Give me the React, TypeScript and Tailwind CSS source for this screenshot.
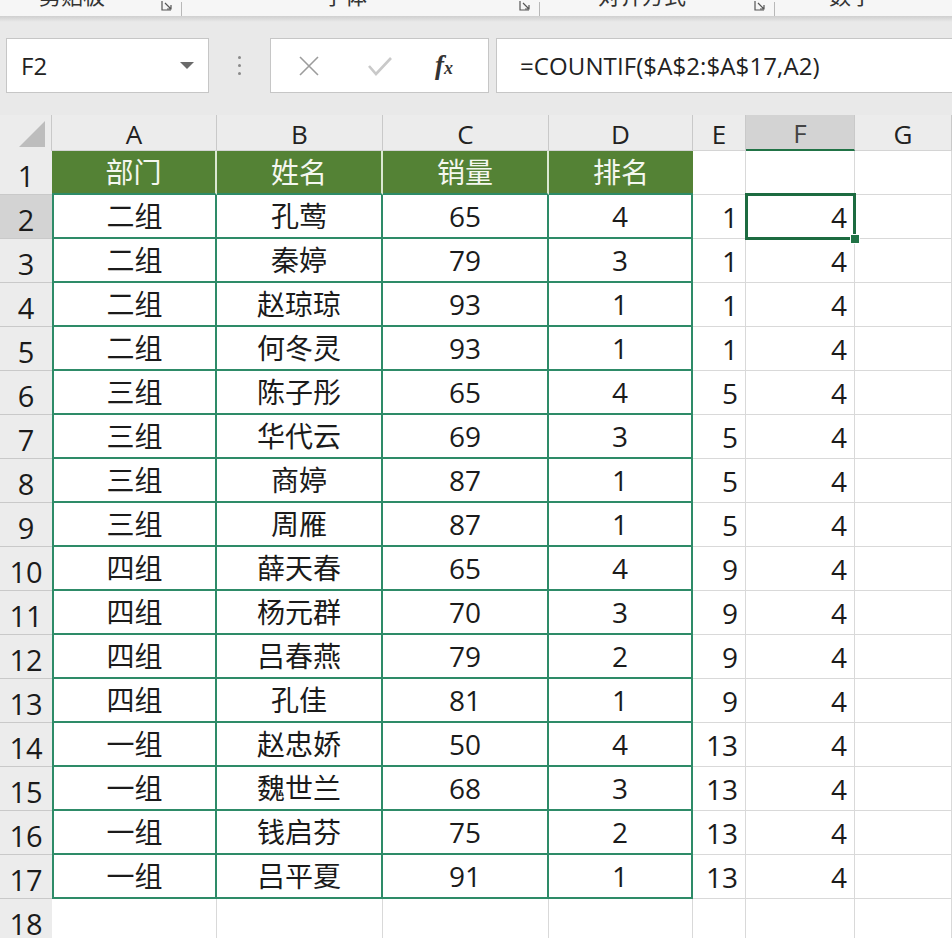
import React from "react";

const FONT = "font-['Open_Sans','Noto_Sans_CJK_SC',sans-serif]";

const rows: [string, string, number, number, number][] = [
  ["二组", "孔莺", 65, 4, 1],
  ["二组", "秦婷", 79, 3, 1],
  ["二组", "赵琼琼", 93, 1, 1],
  ["二组", "何冬灵", 93, 1, 1],
  ["三组", "陈子彤", 65, 4, 5],
  ["三组", "华代云", 69, 3, 5],
  ["三组", "商婷", 87, 1, 5],
  ["三组", "周雁", 87, 1, 5],
  ["四组", "薛天春", 65, 4, 9],
  ["四组", "杨元群", 70, 3, 9],
  ["四组", "吕春燕", 79, 2, 9],
  ["四组", "孔佳", 81, 1, 9],
  ["一组", "赵忠娇", 50, 4, 13],
  ["一组", "魏世兰", 68, 3, 13],
  ["一组", "钱启芬", 75, 2, 13],
  ["一组", "吕平夏", 91, 1, 13],
];

const Launcher = () => (
  <div className="flex items-end h-full">
    <svg width="18" height="16" viewBox="0 0 18 16" className="-mb-[1px]">
      <path d="M2 0 V9 H11" fill="none" stroke="#555" strokeWidth="1.2" />
      <path d="M5 2 L11 8 M7 8 H11 V4" fill="none" stroke="#555" strokeWidth="1.2" />
    </svg>
    <div className="w-[1px] h-[14px] bg-[#b8b8b8] ml-[3px]" />
  </div>
);

const Ribbon = () => (
  <div className="h-[16px] bg-[#f6f6f6] relative overflow-hidden flex text-[22px] text-[#333] leading-none">
    <span className="ml-[39px] -mt-[16px]">剪贴板</span>
    <div className="ml-[55px]"><Launcher /></div>
    <span className="ml-[141px] -mt-[16px]">字体</span>
    <div className="ml-[151px]"><Launcher /></div>
    <span className="ml-[58px] -mt-[16px]">对齐方式</span>
    <div className="ml-[67px]"><Launcher /></div>
    <span className="ml-[54px] -mt-[16px]">数字</span>
  </div>
);

const FormulaBar = () => (
  <div className="flex items-stretch h-[55px] mt-[16px]">
    <div className="ml-[6px] w-[203px] bg-white border border-[#c6c6c6] flex items-center justify-between pl-[14px] pr-[14px]">
      <span className="text-[24px] text-[#222]">F2</span>
      <svg width="14" height="8" viewBox="0 0 14 8">
        <path d="M0 0 H14 L7 7 Z" fill="#6a6a6a" />
      </svg>
    </div>
    <div className="w-[61px] flex flex-col items-center justify-center gap-[5px]">
      <div className="w-[3px] h-[3px] rounded-full bg-[#8a8a8a]" />
      <div className="w-[3px] h-[3px] rounded-full bg-[#8a8a8a]" />
      <div className="w-[3px] h-[3px] rounded-full bg-[#8a8a8a]" />
    </div>
    <div className="w-[219px] bg-white border border-[#c6c6c6] flex items-center">
      <svg width="22" height="22" viewBox="0 0 22 22" className="ml-[27px]">
        <path d="M2 2 L20 20 M20 2 L2 20" stroke="#9c9c9c" strokeWidth="1.6" fill="none" />
      </svg>
      <svg width="26" height="22" viewBox="0 0 26 22" className="ml-[47px]">
        <path d="M2 11 L9 19 L24 3" stroke="#c9c9c9" strokeWidth="2.6" fill="none" />
      </svg>
      <span className="ml-[42px] font-['Liberation_Serif',serif] italic font-bold text-[27px] text-[#333] leading-none">
        f<span className="text-[18px]">x</span>
      </span>
    </div>
    <div className="ml-[7px] flex-1 bg-white border border-r-0 border-[#c6c6c6] flex items-center pl-[23px]">
      <span className="text-[24px] text-[#222] tracking-[0.1px]">=COUNTIF($A$2:$A$17,A2)</span>
    </div>
  </div>
);

const colW = ["w-[165px]", "w-[166px]", "w-[166px]", "w-[144px]", "w-[53px]", "w-[109px]", "w-[97px]"];
const letters = ["A", "B", "C", "D", "E", "F", "G"];

const grid = "border-r border-b border-[#d9d9d9]";
const green = "border-[#2e8b68]";

const RowHead = ({ n, sel }: { n: number; sel?: boolean }) => (
  <div
    className={`w-[52px] shrink-0 h-full flex items-center justify-center pt-[6px] text-[29px] border-b border-[#c9c9c9] ${
      sel ? "bg-[#d3d3d3]" : "bg-[#ececec]"
    }`}
  >
    {n}
  </div>
);

const Sheet = () => (
  <div className="mt-[22px] text-[28px] text-[#1b1b1b] leading-none">
    {/* column headers */}
    <div className="flex h-[36px]">
      <div className="w-[52px] shrink-0 bg-[#ececec] border-r border-[#c9c9c9] flex items-end justify-end pr-[6px] pb-[4px]">
        <svg width="26" height="26" viewBox="0 0 26 26">
          <path d="M26 0 V26 H0 Z" fill="#bdbdbd" />
        </svg>
      </div>
      {letters.map((l, i) => (
        <div
          key={l}
          className={`${colW[i]} shrink-0 flex items-center justify-center pt-[2px] text-[26px] ${
            l === "F"
              ? "bg-[#d3d3d3] border-b-2 border-b-[#217346] border-r border-r-[#c9c9c9] text-[#444]"
              : "bg-[#ececec] border-r border-[#c9c9c9] border-b border-b-[#d4d4d4] text-[#222]"
          }`}
        >
          {l}
        </div>
      ))}
    </div>

    {/* row 1 */}
    <div className="flex h-[44px]">
      <RowHead n={1} />
      {["部门", "姓名", "销量", "排名"].map((t, i) => (
        <div
          key={t}
          className={`${colW[i]} shrink-0 bg-[#548235] text-[#f4f7ef] flex items-center justify-center border-b-2 ${green} ${
            i < 3 ? "border-r-2 border-r-[#dbe8d2]" : ""
          }`}
        >
          {t}
        </div>
      ))}
      <div className={`${colW[4]} shrink-0 bg-white ${grid}`} />
      <div className={`${colW[5]} shrink-0 bg-white ${grid}`} />
      <div className={`${colW[6]} shrink-0 bg-white ${grid}`} />
    </div>

    {rows.map((r, idx) => (
      <div key={idx} className="flex h-[44px]">
        <RowHead n={idx + 2} sel={idx === 0} />
        <div className={`${colW[0]} shrink-0 bg-white flex items-center justify-center border-l-2 border-r-2 border-b-2 ${green}`}>
          {r[0]}
        </div>
        <div className={`${colW[1]} shrink-0 bg-white flex items-center justify-center border-r-2 border-b-2 ${green}`}>
          {r[1]}
        </div>
        <div className={`${colW[2]} shrink-0 bg-white flex items-center justify-center border-r-2 border-b-2 ${green}`}>
          {r[2]}
        </div>
        <div className={`${colW[3]} shrink-0 bg-white flex items-center justify-center border-r-2 border-b-2 ${green}`}>
          {r[3]}
        </div>
        <div className={`${colW[4]} shrink-0 bg-white flex items-center justify-end pr-[7px] ${grid}`}>{r[4]}</div>
        <div className={`${colW[5]} shrink-0 bg-white flex items-center justify-end pr-[7px] relative ${grid}`}>
          4
          {idx === 0 && (
            <>
              <div className="absolute z-10 -left-[1px] -top-[2px] -right-[2px] -bottom-[2px] border-[3px] border-[#1d6b40]" />
              <div className="absolute z-20 -right-[6px] -bottom-[6px] w-[10px] h-[10px] bg-[#217346] border border-white" />
            </>
          )}
        </div>
        <div className={`${colW[6]} shrink-0 bg-white ${grid}`} />
      </div>
    ))}

    {/* row 18 */}
    <div className="flex h-[44px]">
      <RowHead n={18} />
      {colW.map((w, i) => (
        <div key={i} className={`${w} shrink-0 bg-white ${grid}`} />
      ))}
    </div>
  </div>
);

export default function App() {
  return (
    <div className={`w-[952px] h-[938px] overflow-hidden bg-[#e9e9e9] ${FONT}`}>
      <Ribbon />
      <div className="h-[6px] bg-gradient-to-b from-[#cfcfcf] to-[#e9e9e9]" />
      <FormulaBar />
      <Sheet />
    </div>
  );
}
